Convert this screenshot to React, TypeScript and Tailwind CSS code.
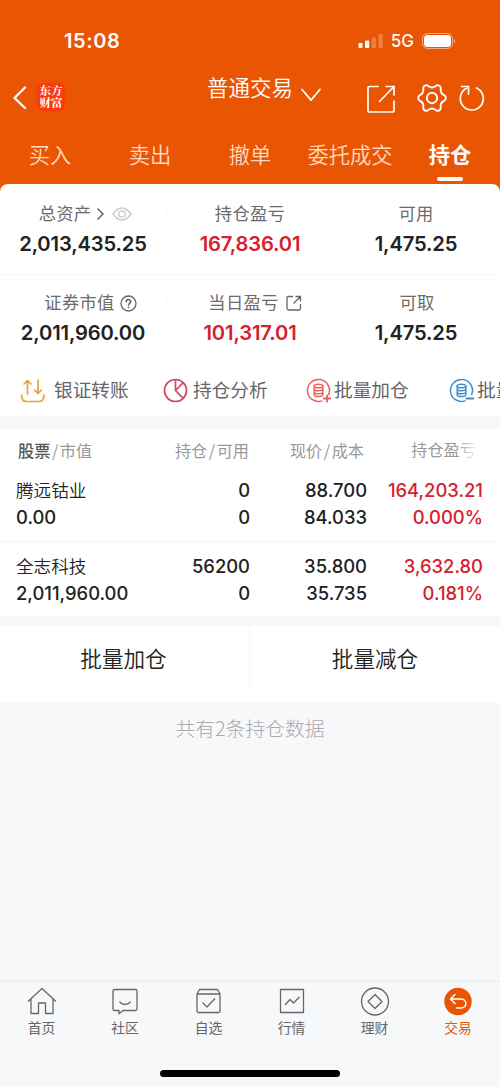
import type { ReactNode } from 'react';

const CJK = "font-['Inter','Noto_Sans_CJK_SC',sans-serif]";

function Signal() {
  return (
    <svg width="25" height="16" viewBox="0 0 25 16" fill="#fff">
      <rect x="0.5" y="10" width="4" height="5" rx="1" />
      <rect x="7" y="7.5" width="4.2" height="7.5" rx="1" />
      <rect x="13.7" y="4.5" width="4.2" height="10.5" rx="1" opacity="0.25" />
      <rect x="20.5" y="1" width="4.2" height="14" rx="1" opacity="0.25" />
    </svg>
  );
}

function Battery() {
  return (
    <svg width="34" height="16" viewBox="0 0 34 16">
      <rect x="0.5" y="0.5" width="30" height="15" rx="5" fill="none" stroke="#fff" strokeOpacity="0.5" />
      <rect x="2" y="2" width="27" height="12" rx="3.5" fill="#fff" />
      <path d="M32 5.5c1.4.6 1.4 4.4 0 5z" fill="#fff" opacity="0.5" />
    </svg>
  );
}

function TransferIcon() {
  return (
    <svg width="26" height="26" viewBox="0 0 26 26" fill="none" stroke="#e8a33a" strokeWidth="1.7" strokeLinecap="round" strokeLinejoin="round">
      <path d="M7.500 16V2.500M4 6l3.500-3.500L11 6M18 2v13.500M14.600 12.100L18 15.500l3.400-3.400M1.500 17c0 4.500 1.800 6.500 5 6.500h12.500c3.200 0 5-2 5-6.500" />
    </svg>
  );
}

function PieIcon() {
  return (
    <svg width="26" height="26" viewBox="0 0 26 26" fill="none" stroke="#d6455a" strokeWidth="1.700" strokeLinejoin="round">
      <circle cx="12.500" cy="12.500" r="11" />
      <path d="M12.500 1.500v11l7.700 7.900M12.500 12.500l7.700-7.900" />
    </svg>
  );
}

function CoinIcon({ color, plus }: { color: string; plus?: boolean }) {
  return (
    <svg width="26" height="26" viewBox="0 0 26 26" fill="none" stroke={color} strokeWidth="1.500" strokeLinecap="round">
      <path d="M22.700 16.500A11 11 0 1 0 16 22.900" />
      <ellipse cx="12.500" cy="8" rx="4.300" ry="1.800" />
      <path d="M8.200 8v8.700c0 2.400 8.600 2.400 8.600 0V8M8.200 11c0 2.400 8.600 2.400 8.600 0M8.200 14c0 2.400 8.600 2.400 8.600 0" />
      <path d={plus ? 'M17.800 20.500h6.400M21 17.300v6.400' : 'M17.300 20.500h7'} strokeWidth="1.800" />
    </svg>
  );
}

function Stat({ label, value, red, extra, shift = '' }: { label: string; value: string; red?: boolean; extra?: ReactNode; shift?: string }) {
  return (
    <div className="flex flex-col items-center">
      <div className={`flex h-6 items-center text-[17.300px] tracking-[0.3px] text-[#6b6b6b] ${shift}`}>
        {label}
        {extra}
      </div>
      <div className={`mt-[6px] h-6 text-[20.200px] leading-6 font-semibold tracking-[-0.15px] ${red ? 'text-[#d6202e]' : 'text-[#222]'}`}>{value}</div>
    </div>
  );
}

function StatDivider() {
  return <div className="mt-1 h-4 w-px bg-[#f9f9f9]" />;
}

function Action({ icon, label }: { icon: ReactNode; label: string }) {
  return (
    <div className="flex shrink-0 items-center text-[18.700px] whitespace-nowrap text-[#666]">
      {icon}
      {label}
    </div>
  );
}

type Row = { name: string; value: string; held: string; free: string; price: string; cost: string; profit: string; rate: string };

const rows: Row[] = [
  { name: '腾远钴业', value: '0.00', held: '0', free: '0', price: '88.700', cost: '84.033', profit: '164,203.21', rate: '0.000%' },
  { name: '全志科技', value: '2,011,960.00', held: '56200', free: '0', price: '35.800', cost: '35.735', profit: '3,632.80', rate: '0.181%' },
];

function Holding({ row }: { row: Row }) {
  return (
    <div className="grid h-[75px] grid-cols-[134px_100px_117px_116px] content-start pt-[11px] pl-4 text-[18.400px] leading-[27px] font-medium text-[#222]">
      <div className="text-[17.600px] font-[350]">{row.name}</div>
      <div className="text-right">{row.held}</div>
      <div className="text-right">{row.price}</div>
      <div className="text-right text-[#d6202e]">{row.profit}</div>
      <div>{row.value}</div>
      <div className="text-right">{row.free}</div>
      <div className="text-right">{row.cost}</div>
      <div className="text-right text-[#d6202e]">{row.rate}</div>
    </div>
  );
}

function Slash() {
  return <span className="px-[1.500px] font-['Noto_Sans_CJK_SC',sans-serif]">/</span>;
}

const navIcons: { label: string; icon: ReactNode }[] = [
  { label: '首页', icon: <path d="M1 14.500L15 1.500l14 13M4 12v14.500h7.500V16h7v10.500H26V12" /> },
  { label: '社区', icon: <path d="M4.500 2.500h21a1.500 1.500 0 0 1 1.500 1.500v18a1.500 1.500 0 0 1-1.500 1.500H13l-4 3.300v-3.300H4.500A1.500 1.500 0 0 1 3 22V4a1.500 1.500 0 0 1 1.500-1.500zM9.500 14.500c2.500 4 8.500 4 11 0" /> },
  { label: '自选', icon: <path d="M3 7l2.500-4.500h18L26 7v17a1.500 1.500 0 0 1-1.500 1.500h-20A1.500 1.500 0 0 1 3 24zM3 7h23M8.500 15.500l4.500 4.500 8-8.500" /> },
  { label: '行情', icon: <path d="M3.500 2.500h23v23h-23zM8 18l5-5.500 3.500 3.500 6-6" /> },
  { label: '理财', icon: <><circle cx="15" cy="14.500" r="13.500" /><path d="M15 7.500l7 7-7 7-7-7z" /></> },
];

export default function App() {
  return (
    <div className={`flex h-[1087px] w-[500px] flex-col overflow-hidden bg-[#f7f8fa] ${CJK}`}>
      <div className="bg-[#ea5504]">
        <header className="h-[184px] text-white">
          <div className="flex h-[62px] items-end justify-between pr-[44px] pb-[9px] pl-16">
            <div className="text-[20px] leading-6 font-semibold tracking-[0.600px]">15:08</div>
            <div className="flex items-center">
              <Signal />
              <span className="mr-2 ml-2 text-[17px] leading-6 font-medium">5G</span>
              <Battery />
            </div>
          </div>
          <div className="flex h-[70px] items-center pl-3">
            <svg width="16" height="24" viewBox="0 0 16 24" fill="none" stroke="#fff" strokeWidth="2.300" strokeLinecap="round" strokeLinejoin="round">
              <path d="M13 2.500L2.500 13 13 23" />
            </svg>
            <div className="ml-[9px] flex h-7 w-7 flex-col items-center justify-center rounded-lg bg-[#f93a0c] font-['Liberation_Serif','Noto_Serif_CJK_SC','Noto_Sans_CJK_SC',serif] text-[11.500px] leading-[12.500px] font-bold shadow-[0_0_3px_#f93a0c]">
              <span>东方</span>
              <span>财富</span>
            </div>
            <div className="mb-[19px] ml-[142px] text-[21.500px] leading-8 font-[350] whitespace-nowrap">普通交易</div>
            <svg className="mb-1 ml-[7px]" width="22" height="16" viewBox="0 0 22 16" fill="none" stroke="#fff" strokeWidth="1.800" strokeLinecap="round">
              <path d="M2 2.500l9 10.500L20 2.500" />
            </svg>
            <svg className="mt-[3px] ml-[45px]" width="28" height="30" viewBox="0 0 28 30" fill="none" stroke="#fff" strokeWidth="1.700" strokeLinecap="round">
              <path d="M11 2.500H2.500A1.500 1.500 0 0 0 1 4v22.500A1.500 1.500 0 0 0 2.500 28h23a1.500 1.500 0 0 0 1.500-1.500V17M19 2.500h8V11M27 2.500L12.500 17.500" />
            </svg>
            <svg className="mt-[2px] ml-[22px]" width="30" height="30" viewBox="0 0 30 30" fill="none" stroke="#fff" strokeWidth="1.900" strokeLinejoin="round">
              <path d="M7.800 2.500Q9.500 1.500 11.200 3Q15 6 18.800 3Q20.500 1.500 22.200 2.500Q24 3.500 23.700 6Q23.300 10.500 27 12Q28.800 13 28.800 15Q28.800 17 27 18Q23.300 19.500 23.700 24Q24 26.500 22.200 27.500Q20.500 28.500 18.800 27Q15 24 11.200 27Q9.500 28.500 7.800 27.500Q6 26.500 6.300 24Q6.700 19.500 3 18Q1.200 17 1.200 15Q1.200 13 3 12Q6.700 10.500 6.300 6Q6 3.500 7.800 2.500Z" />
              <circle cx="15" cy="15" r="5.200" />
            </svg>
            <svg className="mt-[2px] ml-[11px]" width="28" height="28" viewBox="0 0 28 28" fill="none" stroke="#fff" strokeWidth="1.700" strokeLinecap="round">
              <path d="M18.500 4A11.500 11.500 0 1 1 8.500 4.300M3.500 2.500h7v7.500" />
            </svg>
          </div>
          <nav className="grid grid-cols-5 text-center text-[21.300px] leading-8 font-[350] text-[#ffd9bd]">
            <div className="pt-[7px]">买入</div>
            <div className="pt-[7px]">卖出</div>
            <div className="pt-[7px]">撤单</div>
            <div className="pt-[7px] whitespace-nowrap">委托成交</div>
            <div className="flex flex-col items-center pt-[7px] font-bold text-white">
              持仓
              <span className="mt-[6px] h-1 w-[26px] rounded-full bg-white" />
            </div>
          </nav>
        </header>
        <section className="h-[232px] overflow-hidden rounded-t-lg bg-white">
          <div className="grid h-[91px] grid-cols-[166px_1px_166px_1px_164px] border-b border-[#f8f8f8] pt-[18px]">
            <Stat
              label="总资产"
              value="2,013,435.25"
              shift="pl-[5px]"
              extra={
                <>
                  <svg className="ml-[5px]" width="9" height="14" viewBox="0 0 9 14" fill="none" stroke="#666" strokeWidth="1.500">
                    <path d="M1.500 1.500L7 7l-5.500 5.500" />
                  </svg>
                  <svg className="ml-[7px]" width="20" height="14" viewBox="0 0 20 14" fill="none" stroke="#c4cacd" strokeWidth="1.300">
                    <path d="M1 7Q10-5 19 7Q10 19 1 7z" />
                    <circle cx="10" cy="7" r="3.200" />
                  </svg>
                </>
              }
            />
            <StatDivider />
            <Stat label="持仓盈亏" value="167,836.01" red />
            <StatDivider />
            <Stat label="可用" value="1,475.25" />
          </div>
          <div className="grid h-[91px] grid-cols-[166px_1px_166px_1px_164px] pt-[16px]">
            <Stat
              label="证券市值"
              value="2,011,960.00"
              shift="pl-[15px]"
              extra={
                <svg className="ml-[5px]" width="17" height="17" viewBox="0 0 17 17" fill="none" stroke="#666" strokeWidth="1.300" strokeLinecap="round">
                  <circle cx="8.500" cy="8.500" r="7.500" />
                  <path d="M6.300 6.800c0-3 4.400-3 4.400-.2 0 1.700-2.200 1.700-2.200 3.400M8.500 12.200v.2" strokeWidth="1.600" />
                </svg>
              }
            />
            <StatDivider />
            <Stat
              label="当日盈亏"
              value="101,317.01"
              red
              shift="pl-[10px]"
              extra={
                <svg className="ml-[7px]" width="16" height="16" viewBox="0 0 16 16" fill="none" stroke="#666" strokeWidth="1.300">
                  <path d="M7 1.500H2.500a1.500 1.500 0 0 0-1.500 1.500v10.500A1.500 1.500 0 0 0 2.500 15h10.500a1.500 1.500 0 0 0 1.500-1.500V9M9.500 1.500h5v5M14.500 1.500L7.500 8.500" />
                </svg>
              }
            />
            <StatDivider />
            <Stat label="可取" value="1,475.25" shift="pl-[2px]" />
          </div>
          <div className="grid h-[50px] grid-cols-[143px_143px_143px_143px] items-center pt-px pl-5">
            <Action icon={<span className="mr-2"><TransferIcon /></span>} label="银证转账" />
            <Action icon={<span className="mr-1"><PieIcon /></span>} label="持仓分析" />
            <Action icon={<span className="mr-[2px]"><CoinIcon color="#e0645c" plus /></span>} label="批量加仓" />
            <Action icon={<span className="mr-[2px]"><CoinIcon color="#3d8fd0" /></span>} label="批量减仓" />
          </div>
        </section>
      </div>

      <section className="mt-[13px] h-[187px] bg-white">
        <div className="grid h-[37px] grid-cols-[133px_98px_115px_112px] pt-[9px] pl-[18px] text-[16.200px] leading-6 whitespace-nowrap text-[#999]">
          <div><span className="font-medium text-[#555]">股票</span><Slash />市值</div>
          <div className="text-right">持仓<Slash />可用</div>
          <div className="text-right">现价<Slash />成本</div>
          <div className="text-right">持仓盈<span className="bg-linear-to-r from-[#aaa] to-[#f4f4f4] bg-clip-text text-transparent">亏</span></div>
        </div>
        <div>
          <Holding row={rows[0]} />
          <div className="border-t border-[#f5f5f5]">
            <Holding row={rows[1]} />
          </div>
        </div>
      </section>

      <section className="mt-[10px] grid h-[77px] grid-cols-2 bg-white text-center text-[21.600px] leading-[66px] font-[350] text-[#222]">
        <div className="h-[64px] border-r border-[#f5f5f5] pr-[2px]">批量加仓</div>
        <div>批量减仓</div>
      </section>
      <p className="mt-[11px] text-center font-['Noto_Sans_CJK_SC',sans-serif] text-[19.800px] leading-7 font-light text-[#a8abb0]">共有2条持仓数据</p>

      <footer className="mt-auto h-[107px] border-t-2 border-[#eeeff0]">
        <nav className="grid grid-cols-[83px_84px_83px_83px_83px_84px] pt-[5px] text-[13.800px] leading-5 text-[#666]">
          {navIcons.map(({ label, icon }) => (
            <div key={label} className="flex flex-col items-center">
              <svg width="30" height="29" viewBox="0 0 30 29" fill="none" stroke="#666" strokeWidth="1.300" strokeLinejoin="round">{icon}</svg>
              <span className="mt-[2px]">{label}</span>
            </div>
          ))}
          <div className="flex flex-col items-center text-[#ea5504]">
            <svg width="30" height="29" viewBox="0 0 30 29" fill="none" stroke="#fff" strokeWidth="1.500" strokeLinecap="round" strokeLinejoin="round">
              <circle cx="15" cy="14.500" r="13.700" fill="#ea5504" stroke="none" />
              <path d="M12 7.500l-4.500 4.500 4.500 4.500M7.500 12h10.500c6.500 0 6.500 9 0 9h-4.500" />
            </svg>
            <span className="mt-[2px]">交易</span>
          </div>
        </nav>
        <div className="mx-auto mt-[32px] h-[7px] w-[180px] rounded-full bg-black" />
      </footer>
    </div>
  );
}
